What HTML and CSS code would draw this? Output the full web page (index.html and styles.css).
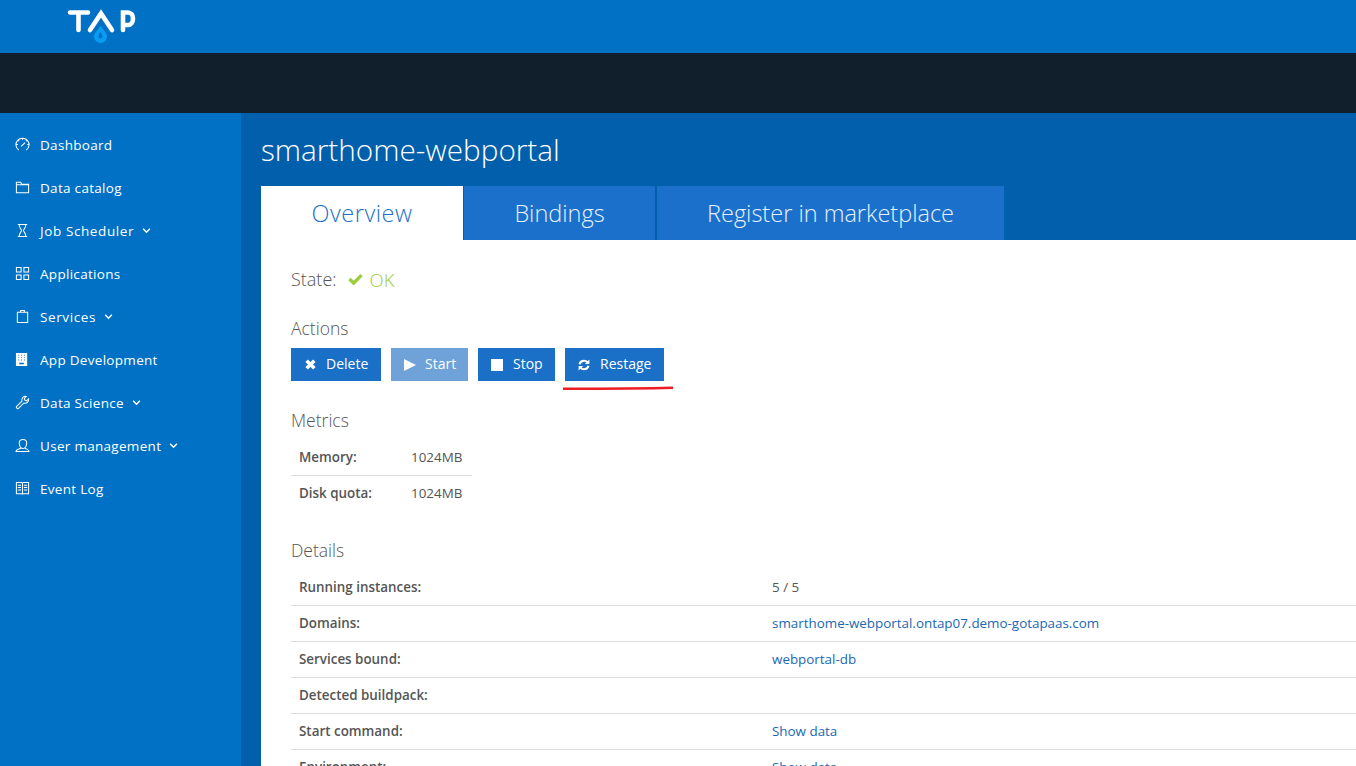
FILE: index.html
```html
<!DOCTYPE html>
<html lang="en">
<head>
<meta charset="utf-8">
<title>smarthome-webportal</title>
<link rel="stylesheet" href="styles.css">
</head>
<body>
<header class="topbar">
  <svg class="logo" width="72" height="36" viewBox="0 0 72 36" aria-label="TAP">
    <g fill="none" stroke="#fff" stroke-width="4.600" stroke-linecap="round" stroke-linejoin="miter">
      <path d="M4 4.500H22M12.500 4.500V22"/>
      <path d="M24 22 35 5.500 46 22"/>
      <path d="M57 22V4.500H62C65 4.500 67 7 67 10.500S65 17 62 17H58"/>
    </g>
    <path d="M34.500 18C31.500 22 28 25 28 28.500A6.500 6.500 0 0 0 41 28.500C41 25 37.500 22 34.500 18Z" fill="#0a9cf0"/>
    <path d="M34.500 24C33.500 26 32.500 27 32.500 28.500A2 2 0 0 0 36.500 28.500C36.500 27 35.500 26 34.500 24Z" fill="#0071c5"/>
  </svg>
</header>
<div class="darkbar"></div>
<div class="shell">
  <nav class="sidebar">
    <a class="nav-item"><svg class="nav-icon" viewBox="0 0 16 16"><path d="M4 14A7 7 0 1 1 12 14M8 1V3M1 8H3M13 8H15M3 3 4.500 4.500M13 3 11.500 4.500M6.500 10 10.800 6"/></svg><span>Dashboard</span></a>
    <a class="nav-item"><svg class="nav-icon" viewBox="0 0 16 16"><path d="M1.500 13.500V2.500H6L7.500 4.500H14.500V13.500ZM1.500 5H14.500"/></svg><span>Data catalog</span></a>
    <a class="nav-item"><svg class="nav-icon" viewBox="0 0 16 16"><path d="M3 1.500H13M3 14.500H13M4.500 1.500C4.500 6 7 6.500 7 8S4.500 10 4.500 14.500M11.500 1.500C11.500 6 9 6.500 9 8S11.500 10 11.500 14.500"/></svg><span class="nav-wide">Job Scheduler</span><svg class="chev" viewBox="0 0 8 6"><path d="M1 1.500 4 4.500 7 1.500"/></svg></a>
    <a class="nav-item"><svg class="nav-icon" viewBox="0 0 16 16"><path d="M1.500 1.500H6.500V6.500H1.500ZM9.500 1.500H14.500V6.500H9.500ZM1.500 9.500H6.500V14.500H1.500ZM9.500 9.500H14.500V14.500H9.500Z"/></svg><span>Applications</span></a>
    <a class="nav-item"><svg class="nav-icon" viewBox="0 0 16 16"><path d="M2.500 3.500H13.500V14.500H2.500ZM6 3.500V1.500H10V3.500"/></svg><span class="nav-wide">Services</span><svg class="chev" viewBox="0 0 8 6"><path d="M1 1.500 4 4.500 7 1.500"/></svg></a>
    <a class="nav-item"><svg class="nav-icon solid" viewBox="0 0 16 16"><path fill-rule="evenodd" d="M1 1H13V15H1ZM3.500 3V4H4.500V3ZM6.500 3V4H7.500V3ZM9.500 3V4H10.500V3ZM3.500 5.500V6.500H4.500V5.500ZM6.500 5.500V6.500H7.500V5.500ZM9.500 5.500V6.500H10.500V5.500ZM3.500 8V9H4.500V8ZM6.500 8V9H7.500V8ZM9.500 8V9H10.500V8ZM4.500 11.500V13H9.500V11.500Z"/></svg><span>App Development</span></a>
    <a class="nav-item"><svg class="nav-icon" viewBox="0 0 16 16"><path d="M1.500 12.500 7.500 6.500C6.500 3.500 9 1 12 1.500L9.800 3.800 10.500 5.500 12.300 6.200 14.500 4C15 7 12.500 9.500 9.500 8.500L3.500 14.500C2.500 15 1 13.500 1.500 12.500Z"/></svg><span>Data Science</span><svg class="chev" viewBox="0 0 8 6"><path d="M1 1.500 4 4.500 7 1.500"/></svg></a>
    <a class="nav-item"><svg class="nav-icon" viewBox="0 0 16 16"><path d="M1 14.500H15C15 12.500 12 12 10.500 10.500 11.800 9 12.500 7.500 12.500 5.500 12.500 3 11 1.500 8.500 1.500S4.500 3 4.500 5.500C4.500 7.500 5.200 9 6.500 10.500 5 12 1 12 1 14.500ZM6.500 10.500C7.500 11.500 8.500 11.500 10.500 10.500"/></svg><span>User management</span><svg class="chev" viewBox="0 0 8 6"><path d="M1 1.500 4 4.500 7 1.500"/></svg></a>
    <a class="nav-item"><svg class="nav-icon" viewBox="0 0 16 16"><path d="M1.500 1.500H7C7.500 1.500 8 2 8 3V14.500C8 14 7.500 13.500 7 13.500H1.500ZM14.500 1.500H9C8.500 1.500 8 2 8 3V14.500C8 14 8.500 13.500 9 13.500H14.500ZM3 4.500H6.500M3 7H6.500M3 9.500H6.500M9.500 4.500H13M9.500 7H13M9.500 9.500H13"/></svg><span>Event Log</span></a>
  </nav>
  <main class="main">
    <div class="hero">
      <h1 class="page-title">smarthome-webportal</h1>
      <div class="tabs">
        <a class="tab tab-overview active">Overview</a>
        <a class="tab tab-bindings">Bindings</a>
        <a class="tab tab-register">Register in marketplace</a>
      </div>
    </div>
    <section class="panel">
      <div class="state">
        <span class="state-label">State:</span>
        <svg class="check" viewBox="0 0 16 13"><path d="M1.500 6.500 6 11 14.500 2.200" /></svg>
        <span class="state-value">OK</span>
      </div>
      <h2 class="heading actions-heading">Actions</h2>
      <div class="actions">
        <button class="btn btn-delete"><svg class="btn-icon" viewBox="0 0 10 10"><path class="x" d="M1.500 1.500 8.500 8.500M8.500 1.500 1.500 8.500"/></svg>Delete</button>
        <button class="btn btn-start disabled"><svg class="btn-icon" viewBox="0 0 12 12"><path class="fill" d="M0 0 12 6 0 12Z"/></svg>Start</button>
        <button class="btn btn-stop"><svg class="btn-icon" viewBox="0 0 12 12"><path class="fill" d="M0 0H12V12H0Z"/></svg>Stop</button>
        <button class="btn btn-restage"><svg class="btn-icon" viewBox="0 0 14 14"><path class="spin" d="M1.800 6C2.400 3.500 4.500 2 7 2 8.800 2 10.300 2.800 11.300 4M12.200 8C11.600 10.500 9.500 12 7 12 5.200 12 3.700 11.200 2.700 10"/><path class="fill" d="M13.300 .5V5.800H8ZM.7 13.500V8.200H6Z"/></svg>Restage</button>
        <svg class="underline" width="112" height="6" viewBox="0 0 112 6"><path d="M1 3.800C35 3.800 75 3.800 111 2.800"/></svg>
      </div>
      <h2 class="heading metrics-heading">Metrics</h2>
      <table class="table metrics">
        <tr><th>Memory:</th><td>1024MB</td></tr>
        <tr><th>Disk quota:</th><td>1024MB</td></tr>
      </table>
      <h2 class="heading details-heading">Details</h2>
      <table class="table details">
        <tr><th>Running instances:</th><td>5 / 5</td></tr>
        <tr><th>Domains:</th><td><a>smarthome-webportal.ontap07.demo-gotapaas.com</a></td></tr>
        <tr><th>Services bound:</th><td><a>webportal-db</a></td></tr>
        <tr><th>Detected buildpack:</th><td></td></tr>
        <tr><th>Start command:</th><td><a>Show data</a></td></tr>
        <tr><th>Environment:</th><td><a>Show data</a></td></tr>
      </table>
    </section>
  </main>
</div>
</body>
</html>
```
FILE: styles.css
```css
* { box-sizing: border-box; }
html, body { margin: 0; height: 100%; overflow: hidden; }
body {
  display: flex;
  flex-direction: column;
  height: 766px;
  background: #fff;
  font-family: "Open Sans", "Noto Sans", sans-serif;
  font-size: 13px;
  color: #555;
}
.topbar { height: 53px; flex: none; background: #0071c5; padding: 8px 0 0 66px; }
.logo { display: block; }
.darkbar { height: 60px; flex: none; background: #111e2c; }
.shell { flex: 1; display: flex; min-height: 0; }
.sidebar { width: 241px; flex: none; background: #0071c5; padding-top: 10px; }
.nav-item { display: flex; align-items: center; height: 43px; padding-left: 15px; color: #fff; font-size: 13.500px; letter-spacing: 0.3px; }
.nav-wide { letter-spacing: 0.6px; }
.nav-icon { width: 15px; height: 15px; margin-right: 10px; flex: none; fill: none; stroke: #fff; stroke-width: 1.100; }
.nav-icon.solid { fill: #fff; stroke: none; }
.chev { width: 9px; height: 7px; margin-left: 8px; fill: none; stroke: #fff; stroke-width: 1.300; }
.main { flex: 1; min-width: 0; display: flex; flex-direction: column; background: #015fab; }
.hero { padding: 18px 0 0 20px; }
.page-title { margin: 0 0 18px; height: 37px; font-size: 29.700px; line-height: 37px; font-weight: 300; color: #fff; }
.tabs { display: flex; gap: 2px; height: 54px; }
.tab { display: flex; align-items: center; justify-content: center; background: #1b70cb; color: #e8f1fb; font-size: 23.500px; font-weight: 300; }
.tab.active { background: #fff; color: #1b70cb; letter-spacing: 0.5px; }
.tab-overview { width: 202px; }
.tab-bindings { width: 191px; margin-left: -1px; }
.tab-register { width: 347px; }
.panel { flex: 1; background: #fff; margin-left: 20px; padding: 0 0 0 30px; overflow: hidden; }
.state { display: flex; align-items: center; height: 24px; margin-top: 27px; font-size: 18px; font-weight: 300; color: #555; }
.check { width: 15px; height: 12px; margin: 0 7px 0 11px; fill: none; stroke: #9ccb3b; stroke-width: 3.600; }
.state-value { color: #9ccb3b; font-size: 18.500px; }
.heading { margin: 0; font-size: 17.500px; font-weight: 300; color: #555; line-height: 22px; }
.actions-heading { margin-top: 26px; }
.actions { position: relative; display: flex; gap: 10px; margin-top: 9px; height: 33px; }
.btn { display: flex; align-items: center; height: 33px; border: 0; padding: 0 0 2px 14px; background: #1a6fc7; color: #fff; font: inherit; font-size: 14px; }
.btn.disabled { background: #6ea2d8; }
.btn-delete { width: 90px; }
.btn-start { width: 77px; padding-left: 13px; }
.btn-stop { width: 77px; padding-left: 13px; }
.btn-restage { width: 99px; padding-left: 13px; }
.btn-icon { width: 12px; height: 12px; margin: 2px 10px 0 0; overflow: visible; }
.btn-delete .btn-icon { width: 11px; height: 11px; }
.btn-start .btn-icon { margin-right: 9px; }
.btn-icon .x { fill: none; stroke: #fff; stroke-width: 3.200; }
.btn-icon .spin { fill: none; stroke: #fff; stroke-width: 2.400; }
.btn-icon .fill { fill: #fff; }
.underline { position: absolute; left: 271px; top: 37px; fill: none; stroke: #ee1c25; stroke-width: 2.400; }
.metrics-heading { margin-top: 28px; }
.details-heading { margin-top: 28px; }
.table { border-collapse: collapse; margin-top: 8px; font-size: 13.400px; }
.table th { padding: 0 0 0 8px; height: 36px; text-align: left; font-size: 13.400px; font-weight: 600; color: #555; }
.table td { padding: 0; height: 36px; color: #555; }
.table tr + tr th, .table tr + tr td { border-top: 1px solid #ddd; }
.metrics { width: 181px; }
.metrics th { width: 120px; }
.details { width: 100%; }
.details th { width: 481px; }
.table a { color: #1b68b3; }
```
